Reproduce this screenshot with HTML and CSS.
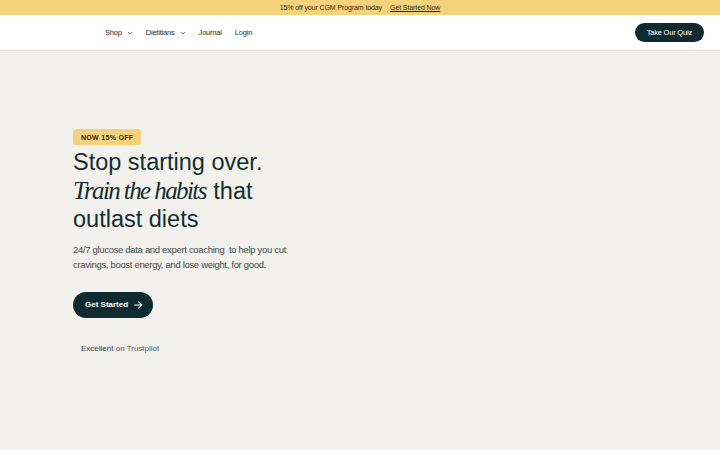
FILE: index.html
```html
<!DOCTYPE html>
<html lang="en">
  <head>
    <meta charset="UTF-8" />
    <meta name="viewport" content="width=device-width, initial-scale=1.0" />
    <title>Habits</title>
    <link rel="stylesheet" href="styles.css">
  </head>
  <body>
    <div class="promo">
      <span>15% off your CGM Program today</span>
      <a href="#">Get Started Now</a>
    </div>

    <header class="nav">
      <ul class="nav-links">
        <li><a href="#">Shop <svg class="caret" viewBox="0 0 10 6"><path d="M2 1.5l3 3 3-3" /></svg></a></li>
        <li><a href="#">Dietitians <svg class="caret" viewBox="0 0 10 6"><path d="M2 1.5l3 3 3-3" /></svg></a></li>
        <li><a href="#">Journal</a></li>
        <li><a href="#">Login</a></li>
      </ul>
      <a class="quiz-btn" href="#">Take Our Quiz</a>
    </header>

    <section class="hero">
      <span class="badge">NOW 15% OFF</span>
      <h1>Stop starting over.<br><em>Train the habits</em> that<br>outlast diets</h1>
      <p>24/7 glucose data and expert coaching&nbsp; to help you cut cravings, boost energy, and lose weight, for good.</p>
      <a class="cta" href="#">Get Started
        <svg viewBox="0 0 12 12"><path d="M1.5 6h9M6.5 2l4 4-4 4" /></svg>
      </a>
      <div class="rating"><b>Excellent</b> on Trustpilot</div>
    </section>
  </body>
</html>
```
FILE: styles.css
```css
* {
  box-sizing: border-box;
}

body {
  margin: 0;
  font-family: "Liberation Sans", Arial, sans-serif;
  color: #17302f;
  background: #f2f1ed;
}

a {
  color: inherit;
  text-decoration: none;
}

.promo {
  height: 15px;
  display: flex;
  justify-content: center;
  align-items: center;
  gap: 8px;
  background: #f4d27b;
  font-size: 7px;
  letter-spacing: -0.1px;
  color: #2a2a1c;
}

.promo a {
  text-decoration: underline;
}

.nav {
  height: 36px;
  display: flex;
  align-items: center;
  justify-content: space-between;
  padding: 0 16px 0 105px;
  background: #fff;
  border-bottom: 1px solid #e6e5e0;
}

.nav-links {
  display: flex;
  gap: 13px;
  margin: 0;
  padding: 0;
  list-style: none;
  font-size: 7.5px;
  letter-spacing: -0.2px;
  color: #1e2b2b;
}

.nav-links a {
  display: flex;
  align-items: center;
  gap: 5px;
}

.caret {
  width: 6px;
  height: 4px;
  fill: none;
  stroke: #1e2b2b;
  stroke-width: 1.3;
}

.quiz-btn {
  height: 19px;
  padding: 0 12px;
  display: flex;
  align-items: center;
  border-radius: 10px;
  background: #0f2b2f;
  color: #fff;
  font-size: 7.5px;
  letter-spacing: -0.2px;
}

.hero {
  padding: 78px 0 0 73px;
  display: flex;
  flex-direction: column;
  align-items: flex-start;
}

.badge {
  height: 16px;
  padding: 0 8px;
  display: flex;
  align-items: center;
  border-radius: 3px;
  background: #f4d27b;
  font-size: 7px;
  font-weight: 700;
  letter-spacing: 0.3px;
  color: #2a2a1c;
}

.hero h1 {
  margin: 3px 0 0;
  font-size: 23.5px;
  font-weight: 400;
  line-height: 28.5px;
  color: #142d2e;
}

.hero h1 em {
  font-family: "Liberation Serif", "DejaVu Serif", serif;
  font-style: italic;
  font-size: 25px;
  letter-spacing: -1.6px;
  margin-right: 1px;
}

.hero p {
  width: 235px;
  margin: 8px 0 0;
  font-size: 9.5px;
  letter-spacing: -0.32px;
  line-height: 15px;
  color: #3e4a4a;
}

.cta {
  margin-top: 20px;
  height: 26px;
  padding: 0 10px 0 12px;
  display: flex;
  align-items: center;
  gap: 5px;
  border-radius: 13px;
  background: #0f2b2f;
  color: #fff;
  font-size: 8px;
  font-weight: 700;
}

.cta svg {
  width: 10px;
  height: 10px;
  fill: none;
  stroke: #fff;
  stroke-width: 1.3;
}

.rating {
  margin: 26px 0 0 8px;
  font-size: 8px;
  color: #5a6262;
}

.rating b {
  font-weight: 400;
  color: #2f3a3a;
}
```
